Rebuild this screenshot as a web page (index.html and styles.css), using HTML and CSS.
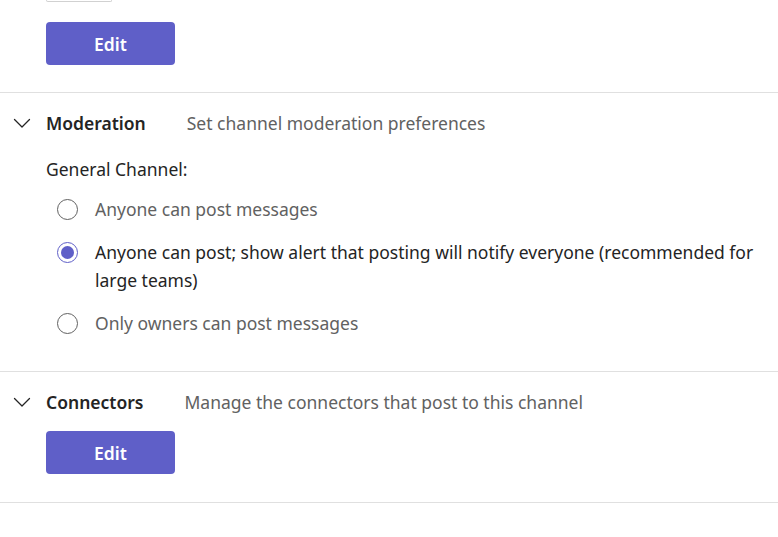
FILE: index.html
```html
<!DOCTYPE html>
<html lang="en">
<head>
<meta charset="utf-8">
<title>Channel settings</title>
<link rel="stylesheet" href="styles.css">
</head>
<body>
<div class="page">
  <section class="section section-top">
    <div class="stub"></div>
    <button class="btn">Edit</button>
  </section>

  <section class="section section-mod">
    <div class="head">
      <span class="chev"><svg width="20" height="20" viewBox="0 0 20 20"><path d="M2.5 6.5 L10 14 L17.5 6.5" fill="none" stroke="#242424" stroke-width="1.3" stroke-linecap="round" stroke-linejoin="round"/></svg></span>
      <span class="title">Moderation</span>
      <span class="desc">Set channel moderation preferences</span>
    </div>
    <div class="body">
      <div class="label">General Channel:</div>
      <div class="radios">
        <div class="radio"><span class="circle"></span><span class="rlabel">Anyone can post messages</span></div>
        <div class="radio checked"><span class="circle"></span><span class="rlabel">Anyone can post; show alert that posting will notify everyone (recommended for large teams)</span></div>
        <div class="radio"><span class="circle"></span><span class="rlabel">Only owners can post messages</span></div>
      </div>
    </div>
  </section>

  <section class="section section-con">
    <div class="head">
      <span class="chev"><svg width="20" height="20" viewBox="0 0 20 20"><path d="M2.5 6.5 L10 14 L17.5 6.5" fill="none" stroke="#242424" stroke-width="1.3" stroke-linecap="round" stroke-linejoin="round"/></svg></span>
      <span class="title">Connectors</span>
      <span class="desc">Manage the connectors that post to this channel</span>
    </div>
    <div class="body">
      <button class="btn btn-con">Edit</button>
    </div>
  </section>
</div>
</body>
</html>
```

FILE: styles.css
```css
html, body {
  margin: 0;
  padding: 0;
  background: #ffffff;
}
body {
  font-family: "Noto Sans", "Open Sans", "Liberation Sans", sans-serif;
  font-size: 17.5px;
  color: #242424;
}
.page {
  width: 778px;
}
.section {
  border-bottom: 1px solid #e0e0e0;
}
.section-top {
  padding: 0 0 27px 46px;
}
.stub {
  width: 64px;
  height: 1px;
  border: 1px solid #d1d1d1;
  border-top: none;
  border-radius: 0 0 4px 4px;
}
.btn {
  display: block;
  width: 129px;
  height: 43px;
  border: none;
  border-radius: 4px;
  background: #5f5fc8;
  color: #ffffff;
  font-family: inherit;
  font-size: 17.5px;
  font-weight: 600;
  padding: 0;
}
.section-top .btn {
  margin-top: 20px;
}
.section-mod {
  padding: 20px 8px 34px 12px;
}
.section-con {
  padding: 20px 8px 28px 12px;
}
.head {
  display: flex;
  align-items: center;
  line-height: 20px;
}
.chev {
  width: 20px;
  height: 20px;
  display: flex;
  align-items: center;
  justify-content: center;
  margin-right: 14px;
}
.title {
  font-weight: 600;
  margin-right: 41px;
}
.desc {
  color: #616161;
}
.body {
  padding-left: 34px;
}
.label {
  margin-top: 26px;
  line-height: 20px;
}
.radios {
  margin-top: 16px;
  display: flex;
  flex-direction: column;
  gap: 15px;
  padding-left: 11px;
}
.radio {
  display: flex;
  align-items: flex-start;
  gap: 17px;
  line-height: 28px;
}
.circle {
  flex: none;
  width: 19px;
  height: 19px;
  margin-top: 4px;
  border: 1px solid #616161;
  border-radius: 50%;
  display: flex;
  align-items: center;
  justify-content: center;
}
.rlabel {
  color: #616161;
}
.radio.checked .circle {
  border-color: #5f5fc8;
}
.radio.checked .circle::after {
  content: "";
  width: 13px;
  height: 13px;
  border-radius: 50%;
  background: #5f5fc8;
}
.radio.checked .rlabel {
  color: #242424;
}
.btn-con {
  margin-top: 19px;
}
```
